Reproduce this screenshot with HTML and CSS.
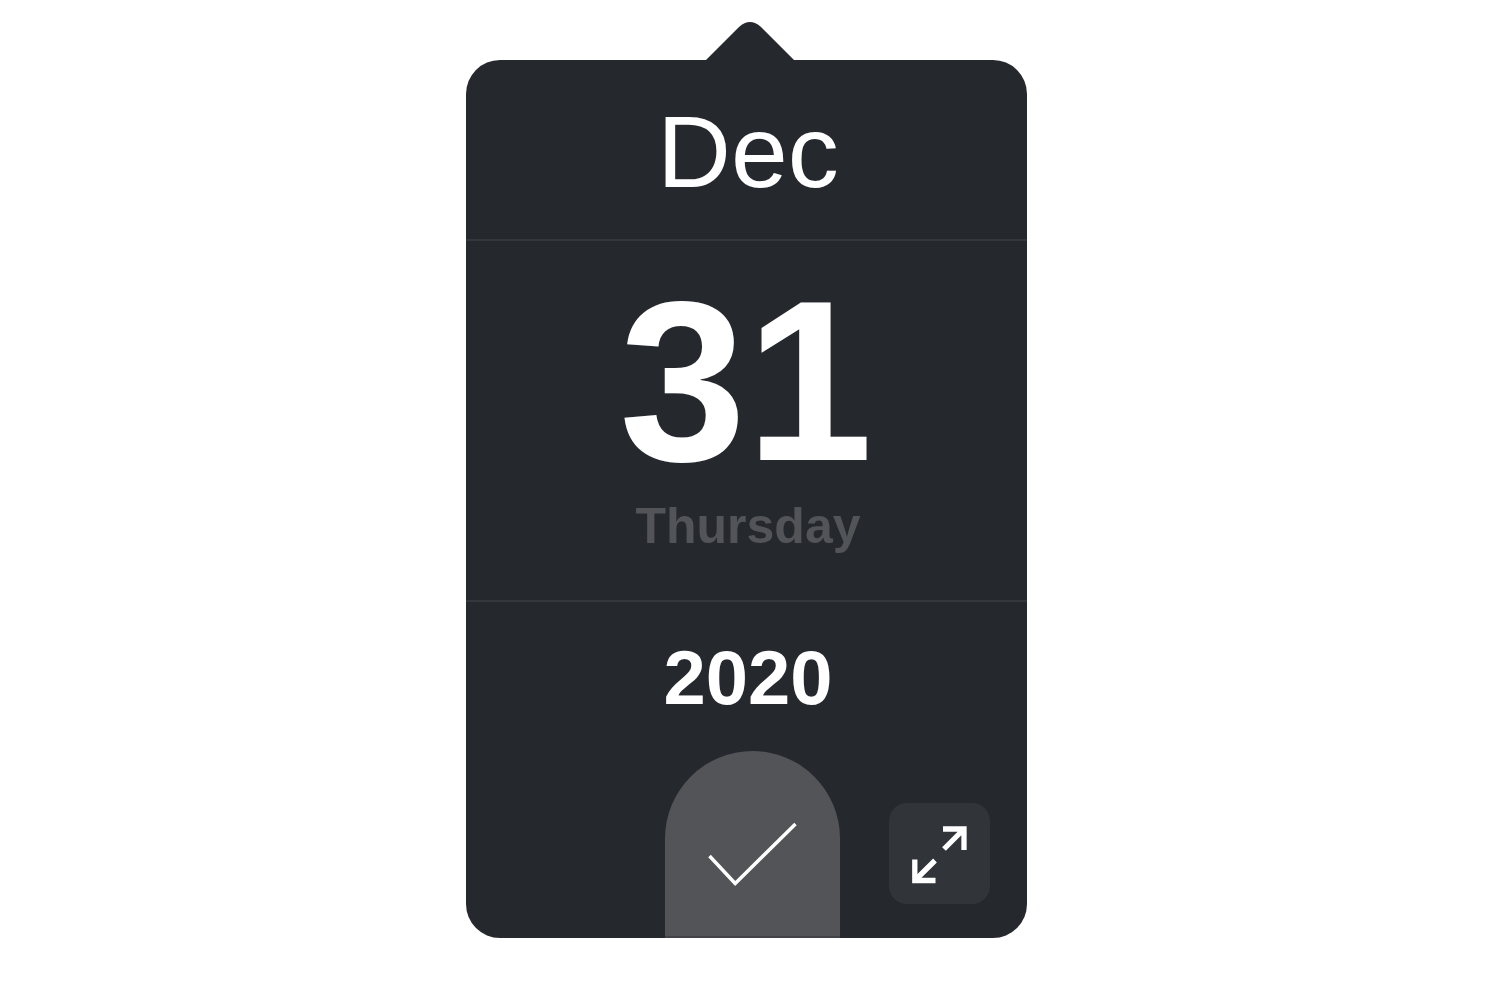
FILE: index.html
```html
<!DOCTYPE html>
<html lang="en">
<head>
<meta charset="utf-8">
<title>Date picker</title>
<link rel="stylesheet" href="styles.css">
</head>
<body>
<main class="picker">
  <svg class="pointer" viewBox="0 0 90 39" aria-hidden="true"><path d="M0 39 34 5Q45-5 56 5L90 39Z"/></svg>
  <section class="month">Dec</section>
  <section class="date">
    <div class="day">31</div>
    <div class="weekday">Thursday</div>
  </section>
  <section class="year">2020</section>
  <footer class="actions">
    <button class="confirm" type="button" aria-label="Confirm date">
      <svg viewBox="0 0 88 64" aria-hidden="true"><path d="M1.5 33 27.2 60.5 87.5 1"/></svg>
    </button>
    <button class="expand" type="button" aria-label="Expand">
      <svg viewBox="0 0 56 58" aria-hidden="true"><path d="M32 4H53V25M53 4 33 24M3.8 34.5V55.5H24.5M3.8 55.5 24 35.5"/></svg>
    </button>
  </footer>
</main>
</body>
</html>
```
FILE: styles.css
```css
* { box-sizing: border-box; }
body {
  margin: 0;
  padding: 60px 28px 56px 20px;
  background: #fff;
  font-family: "Liberation Sans", Arial, sans-serif;
}
.picker {
  position: relative;
  width: 100%;
  max-width: 561px;
  margin: 0 auto;
  border-radius: 34px;
  background: #25282d;
  color: #fff;
  text-align: center;
}
.pointer {
  position: absolute;
  left: 239px;
  top: -38px;
  width: 90px;
  height: 39px;
  fill: #25282d;
}
.month {
  padding: 36px 0 31px 4px;
  font-size: 102px;
  line-height: 112px;
}
.date {
  border: solid #34373b;
  border-width: 2px 0;
  padding: 36px 0 44px;
}
.day {
  font-size: 228px;
  font-weight: 700;
  line-height: 208px;
}
.weekday {
  padding: 11px 0 0 4px;
  color: #535457;
  font-size: 50px;
  font-weight: 700;
  line-height: 60px;
}
.year {
  padding: 36px 0 33px 4px;
  font-size: 76px;
  font-weight: 700;
  line-height: 80px;
}
.actions {
  display: grid;
  grid-template-columns: 1fr 175px 1fr;
  padding-left: 12px;
}
button {
  display: grid;
  place-items: center;
  padding: 0;
  border: 0;
  color: #fff;
  cursor: pointer;
}
svg path { stroke-linejoin: miter; }
.confirm {
  grid-column: 2;
  height: 187px;
  padding-top: 20px;
  border-radius: 88px 88px 0 0;
  background: #535457;
  box-shadow: inset 0 -2px #414347;
}
.confirm svg {
  width: 88px;
  height: 64px;
  overflow: visible;
  fill: none;
  stroke: currentColor;
  stroke-width: 3.5;
}
.expand {
  justify-self: end;
  align-self: end;
  width: 101px;
  height: 101px;
  margin: 0 37px 34px 0;
  border-radius: 18px;
  background: #313438;
}
.expand svg {
  width: 56px;
  height: 58px;
  overflow: visible;
  fill: none;
  stroke: currentColor;
  stroke-width: 5.3;
}
```
